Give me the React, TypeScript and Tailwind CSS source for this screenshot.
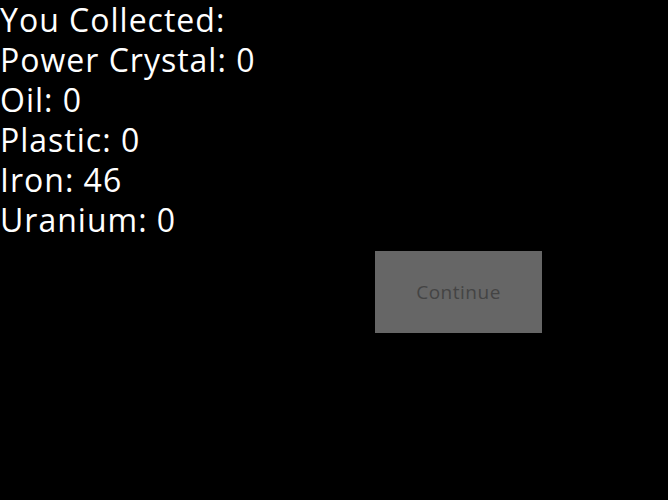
import React from "react";

const items: [string, number][] = [
  ["Power Crystal", 0],
  ["Oil", 0],
  ["Plastic", 0],
  ["Iron", 46],
  ["Uranium", 0],
];

export default function App() {
  return (
    <div className="w-[668px] h-[500px] bg-black text-white font-['Open_Sans',sans-serif] overflow-hidden">
      <div className="text-[32px] leading-[40px] tracking-[1px]">
        <div>You Collected:</div>
        {items.map(([name, count]) => (
          <div key={name}>
            {name}: {count}
          </div>
        ))}
      </div>
      <button className="mt-[11px] ml-[375px] w-[167px] h-[82px] bg-[#666666] text-[#444444] text-[19px] tracking-[0.5px] flex items-center justify-center">
        Continue
      </button>
    </div>
  );
}
